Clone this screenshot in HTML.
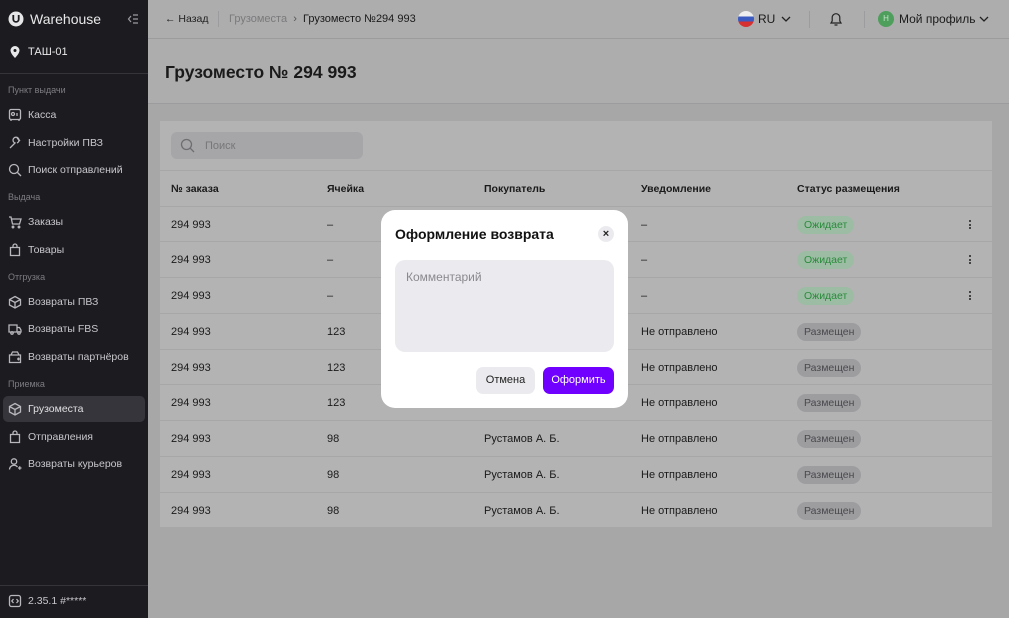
<!DOCTYPE html>
<html><head><meta charset="utf-8"><style>
*{box-sizing:border-box;margin:0;padding:0}
body{width:1009px;height:618px;overflow:hidden;font-family:"Liberation Sans",sans-serif;background:#a7a7a8;position:relative;font-size:11px;color:#1a1a1a}
.sb{position:absolute;left:0;top:0;width:148px;height:618px;background:#1c1c20;color:#c8c8cc}
.sb .t{position:absolute;left:8px;font-size:10.5px;display:flex;align-items:center;gap:6px;white-space:nowrap}
.sb .t svg{width:14px;height:14px;fill:none;stroke:#b8b8bc;stroke-width:1.3}
.sb .s{position:absolute;left:8px;font-size:9px;color:#7c7c82}
.hdr{position:absolute;left:148px;top:0;right:0;height:104px;background:#adadae;border-bottom:1px solid #9c9c9e}
.hdr .line{position:absolute;left:0;right:0;top:38px;border-top:1px solid #9c9c9e}
.card{position:absolute;left:160px;top:121px;width:832px;height:406px;background:#b3b3b4}
.row{position:absolute;left:0;right:0;height:36px;border-top:1px solid #a7a7a8}
.c{position:absolute;top:50%;transform:translateY(-50%);white-space:nowrap}
.bg{padding:3px 7px;border-radius:9px;font-size:10.5px}
.g{background:#9cbda3;color:#2a8a3c}
.p{background:#9d9da0;color:#4a4a4e}
.dots{position:absolute;left:809px;top:50%;transform:translateY(-50%);width:3px}
.dots i{display:block;width:2px;height:2px;background:#222;margin:1.5px 0;border-radius:1px}
.m{position:absolute;left:381px;top:210px;width:247px;height:198px;background:#fff;border-radius:14px}
</style></head><body>
<div class="sb">
 <div class="t" style="top:11px;font-size:14px;color:#e8e8ea"><svg viewBox="0 0 16 16" style="width:16px;height:16px"><circle cx="8" cy="8" r="7.5" fill="#e6e6e8" stroke="none"/><path d="M5.3 4v4.2a2.7 2.7 0 0 0 5.4 0V4" stroke="#1c1c20" stroke-width="1.8"/></svg>Warehouse</div>
 <svg style="position:absolute;left:127px;top:13px;width:12px;height:12px" viewBox="0 0 12 12" fill="none" stroke="#9a9aa0" stroke-width="1.2"><path d="M4 3L1.5 6 4 9M6 2h5M6 6h5M6 10h5"/></svg>
 <div class="t" style="top:45px;color:#e8e8ea;font-size:11px"><svg viewBox="0 0 14 14"><path d="M7 13s4.5-4.5 4.5-7.5a4.5 4.5 0 0 0-9 0C2.5 8.5 7 13 7 13z" fill="#e8e8ea" stroke="none"/><circle cx="7" cy="5.5" r="1.5" fill="#1c1c20" stroke="none"/></svg>ТАШ-01</div>
 <div style="position:absolute;left:0;right:0;top:73px;border-top:1px solid #34343a"></div>
 <div class="s" style="top:85px">Пункт выдачи</div>
 <div class="t" style="top:108px"><svg viewBox="0 0 14 14"><rect x="1.5" y="1.5" width="11" height="10" rx="1.5"/><circle cx="5" cy="6" r="1.5"/><path d="M9 5v3M3 13v-1M11 13v-1"/></svg>Касса</div>
 <div class="t" style="top:136px"><svg viewBox="0 0 14 14"><path d="M2 12l5-5a3 3 0 1 1 2 0"/><path d="M9 2l3 3"/></svg>Настройки ПВЗ</div>
 <div class="t" style="top:163px"><svg viewBox="0 0 14 14"><circle cx="6" cy="6" r="4.5"/><path d="M9.5 9.5L13 13"/></svg>Поиск отправлений</div>
 <div class="s" style="top:192px">Выдача</div>
 <div class="t" style="top:215px"><svg viewBox="0 0 14 14"><path d="M1 2h2l1.5 7h7l1.5-5H4"/><circle cx="5" cy="12" r=".8"/><circle cx="11" cy="12" r=".8"/></svg>Заказы</div>
 <div class="t" style="top:243px"><svg viewBox="0 0 14 14"><path d="M2.5 4.5h9v8h-9z M5 4.5V3a2 2 0 0 1 4 0v1.5"/></svg>Товары</div>
 <div class="s" style="top:272px">Отгрузка</div>
 <div class="t" style="top:295px"><svg viewBox="0 0 14 14"><path d="M7 1.5l5.5 3v5.5L7 13 1.5 10V4.5zM1.5 4.5L7 7.5l5.5-3M7 7.5V13"/></svg>Возвраты ПВЗ</div>
 <div class="t" style="top:322px"><svg viewBox="0 0 14 14"><path d="M1 3h8v7H1zM9 5.5h2.5L13 8v2H9"/><circle cx="4" cy="11" r="1.2"/><circle cx="11" cy="11" r="1.2"/></svg>Возвраты FBS</div>
 <div class="t" style="top:350px"><svg viewBox="0 0 14 14"><path d="M1.5 5h11v7.5h-11zM3 5l1.5-3h5L11 5M9 9h3M10.5 7.5v3"/></svg>Возвраты партнёров</div>
 <div class="s" style="top:379px">Приемка</div>
 <div style="position:absolute;left:3px;top:396px;width:142px;height:26px;background:#35353b;border-radius:5px"></div>
 <div class="t" style="top:402px;color:#e0e0e2"><svg viewBox="0 0 14 14"><path d="M7 1.5l5.5 3v5.5L7 13 1.5 10V4.5zM1.5 4.5L7 7.5l5.5-3M7 7.5V13"/></svg>Грузоместа</div>
 <div class="t" style="top:430px"><svg viewBox="0 0 14 14"><path d="M2.5 4.5h9v8h-9z M5 4.5V3a2 2 0 0 1 4 0v1.5"/></svg>Отправления</div>
 <div class="t" style="top:457px"><svg viewBox="0 0 14 14"><circle cx="6" cy="4.5" r="2.7"/><path d="M1.5 12.5a4.5 4.5 0 0 1 8-2.5M10 11h3.5M11.75 9.25v3.5"/></svg>Возвраты курьеров</div>
 <div style="position:absolute;left:0;right:0;top:585px;border-top:1px solid #34343a"></div>
 <div class="t" style="top:594px"><svg viewBox="0 0 14 14"><rect x="1.5" y="1.5" width="11" height="11" rx="2"/><path d="M5.5 5L3.8 7l1.7 2M8.5 5l1.7 2-1.7 2"/></svg>2.35.1 #*****</div>
</div>
<div class="hdr">
 <div style="position:absolute;left:17px;top:13px;font-size:10.5px;color:#222">← Назад</div>
 <div style="position:absolute;left:70px;top:11px;height:16px;border-left:1px solid #9c9c9e"></div>
 <div style="position:absolute;left:81px;top:13px;font-size:11px;color:#7a7a7c">Грузоместа&nbsp;&nbsp;<span style="color:#555">›</span>&nbsp;&nbsp;<span style="color:#1a1a1a">Грузоместо №294 993</span></div>
 <div style="position:absolute;left:590px;top:11px;width:16px;height:16px;border-radius:50%;background:linear-gradient(#eee 0 33%,#3b5bc0 33% 66%,#d63030 66%)"></div>
 <div style="position:absolute;left:610px;top:12px;font-size:12px;color:#1a1a1a">RU</div>
 <svg style="position:absolute;left:633px;top:15px" width="10" height="8" viewBox="0 0 10 8" fill="none" stroke="#222" stroke-width="1.3"><path d="M1 2l4 4 4-4"/></svg>
 <div style="position:absolute;left:661px;top:11px;height:17px;border-left:1px solid #9c9c9e"></div>
 <svg style="position:absolute;left:681px;top:11px" width="14" height="16" viewBox="0 0 14 16" fill="none" stroke="#222" stroke-width="1.2"><path d="M2 12h10l-1.2-2V6.5a3.8 3.8 0 0 0-7.6 0V10zM5.5 14h3"/></svg>
 <div style="position:absolute;left:716px;top:11px;height:17px;border-left:1px solid #9c9c9e"></div>
 <div style="position:absolute;left:730px;top:11px;width:16px;height:16px;border-radius:50%;background:#4e9e5c;color:#c8e6cc;font-size:8px;text-align:center;line-height:16px">Н</div>
 <div style="position:absolute;left:751px;top:12px;font-size:12px;color:#1a1a1a">Мой профиль</div>
 <svg style="position:absolute;left:831px;top:15px" width="10" height="8" viewBox="0 0 10 8" fill="none" stroke="#222" stroke-width="1.3"><path d="M1 2l4 4 4-4"/></svg>
 <div class="line"></div>
 <div style="position:absolute;left:17px;top:62px;font-size:17.5px;font-weight:bold;color:#1a1a1a">Грузоместо № 294 993</div>
</div>
<div class="card">
 <div style="position:absolute;left:11px;top:11px;width:192px;height:27px;background:#a6a6a8;border-radius:6px">
  <svg style="position:absolute;left:9px;top:6px" width="15" height="15" viewBox="0 0 15 15" fill="none" stroke="#6e6e72" stroke-width="1.3"><circle cx="6.5" cy="6.5" r="5"/><path d="M10.2 10.2L14 14"/></svg>
  <div style="position:absolute;left:34px;top:8px;color:#77777a">Поиск</div>
 </div>
 <div class="row" style="top:49px;font-weight:bold;font-size:10.5px">
  <div class="c" style="left:11px">№ заказа</div><div class="c" style="left:167px">Ячейка</div><div class="c" style="left:324px">Покупатель</div><div class="c" style="left:481px">Уведомление</div><div class="c" style="left:637px">Статус размещения</div>
 </div>
 <div class="row" style="top:85px"><div class="c" style="left:11px">294 993</div><div class="c" style="left:167px">–</div><div class="c" style="left:481px">–</div><div class="c bg g" style="left:637px">Ожидает</div><div class="dots"><i></i><i></i><i></i></div></div>
 <div class="row" style="top:120px"><div class="c" style="left:11px">294 993</div><div class="c" style="left:167px">–</div><div class="c" style="left:481px">–</div><div class="c bg g" style="left:637px">Ожидает</div><div class="dots"><i></i><i></i><i></i></div></div>
 <div class="row" style="top:156px"><div class="c" style="left:11px">294 993</div><div class="c" style="left:167px">–</div><div class="c" style="left:481px">–</div><div class="c bg g" style="left:637px">Ожидает</div><div class="dots"><i></i><i></i><i></i></div></div>
 <div class="row" style="top:192px"><div class="c" style="left:11px">294 993</div><div class="c" style="left:167px">123</div><div class="c" style="left:481px">Не отправлено</div><div class="c bg p" style="left:637px">Размещен</div></div>
 <div class="row" style="top:228px"><div class="c" style="left:11px">294 993</div><div class="c" style="left:167px">123</div><div class="c" style="left:481px">Не отправлено</div><div class="c bg p" style="left:637px">Размещен</div></div>
 <div class="row" style="top:263px"><div class="c" style="left:11px">294 993</div><div class="c" style="left:167px">123</div><div class="c" style="left:481px">Не отправлено</div><div class="c bg p" style="left:637px">Размещен</div></div>
 <div class="row" style="top:299px"><div class="c" style="left:11px">294 993</div><div class="c" style="left:167px">98</div><div class="c" style="left:324px">Рустамов А. Б.</div><div class="c" style="left:481px">Не отправлено</div><div class="c bg p" style="left:637px">Размещен</div></div>
 <div class="row" style="top:335px"><div class="c" style="left:11px">294 993</div><div class="c" style="left:167px">98</div><div class="c" style="left:324px">Рустамов А. Б.</div><div class="c" style="left:481px">Не отправлено</div><div class="c bg p" style="left:637px">Размещен</div></div>
 <div class="row" style="top:371px"><div class="c" style="left:11px">294 993</div><div class="c" style="left:167px">98</div><div class="c" style="left:324px">Рустамов А. Б.</div><div class="c" style="left:481px">Не отправлено</div><div class="c bg p" style="left:637px">Размещен</div></div>
</div>
<div class="m">
 <div style="position:absolute;left:14px;top:16px;font-size:14px;font-weight:bold;color:#111">Оформление возврата</div>
 <div style="position:absolute;left:217px;top:16px;width:16px;height:16px;border-radius:50%;background:#ebebef;text-align:center;line-height:16px;font-size:11px;font-weight:bold;color:#222">×</div>
 <div style="position:absolute;left:14px;top:50px;width:219px;height:92px;background:#ebebef;border-radius:10px"><div style="position:absolute;left:11px;top:10px;font-size:12px;color:#8a8a8e">Комментарий</div></div>
 <div style="position:absolute;left:95px;top:157px;width:59px;height:27px;background:#ebebef;border-radius:7px;text-align:center;line-height:27px;font-size:11px;color:#222">Отмена</div>
 <div style="position:absolute;left:162px;top:157px;width:71px;height:27px;background:#7000ff;border-radius:7px;text-align:center;line-height:27px;font-size:11px;color:#fff">Оформить</div>
</div>
</body></html>
